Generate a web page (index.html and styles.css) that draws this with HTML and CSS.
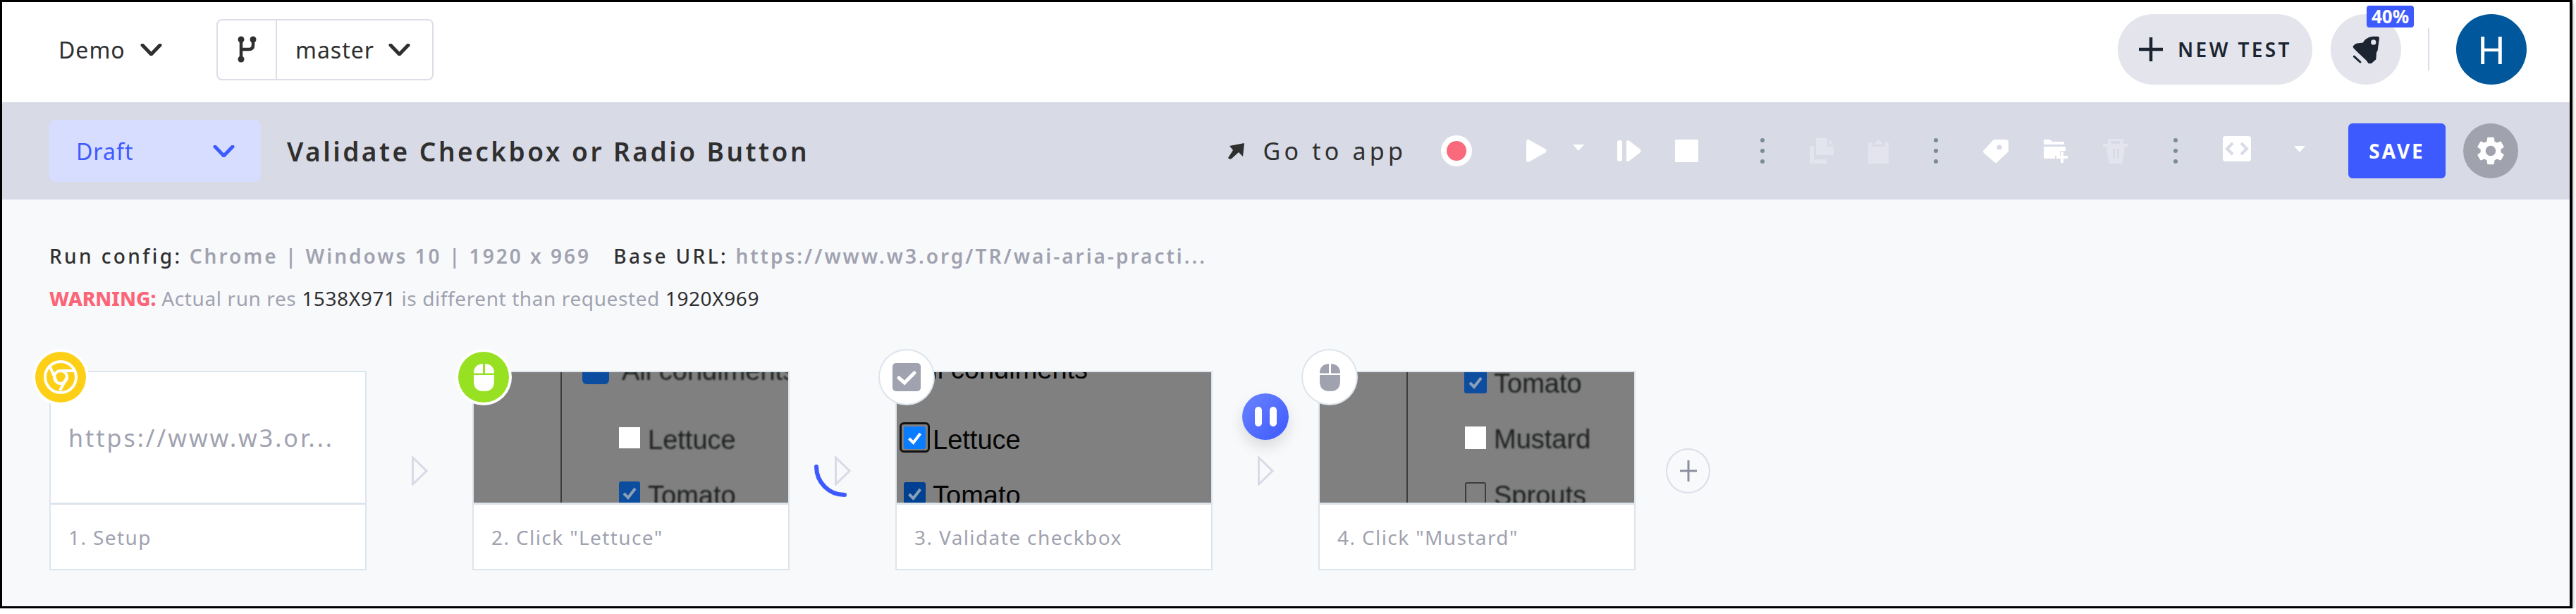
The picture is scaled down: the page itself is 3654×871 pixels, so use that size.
FILE: index.html
```html
<!DOCTYPE html>
<html lang="en">
<head>
    <meta charset="UTF-8">
    <title>Validate Checkbox or Radio Button</title>
    <link rel="stylesheet" href="styles.css">
</head>
<body>
<div class="frame">
    <header class="topbar">
        <div class="project">
            <span>Demo</span>
            <svg class="chevron" viewBox="0 0 31 17"><path d="M3 2l12.500 13L28 2"/></svg>
        </div>
        <div class="branch">
            <div class="branch-icon">
                <svg width="29" height="40" viewBox="0 0 29 40"><path d="M6 6v28M23 6v8q0 6-6 6H6"/><circle cx="6" cy="6" r="4.500"/><circle cx="23" cy="6" r="4.500"/><circle cx="6" cy="34" r="4.500"/></svg>
            </div>
            <div class="branch-name">
                <span>master</span>
                <svg class="chevron" viewBox="0 0 31 17"><path d="M3 2l12.500 13L28 2"/></svg>
            </div>
        </div>
        <div class="top-actions">
            <button class="new-test">
                <svg width="34" height="34" viewBox="0 0 34 34"><path d="M17 0v34M0 17h34"/></svg>
                <span>NEW TEST</span>
            </button>
            <div class="rocket-btn">
                <svg width="38" height="39" viewBox="0 0 115 118"><path d="M108 2q7 0 7 7l-7 52q-1 5-5 9l-2 28q0 4-4 6l-18 16q-5 3-9 0L58 104 22 70 5 53q-6-7 0-12l8-7q3-2 7-2l25-3q4-9 11-15Q70 3 85 2z"/><circle class="rocket-hole" cx="90" cy="27" r="11"/><path class="rocket-flame" d="M7 88l26 24"/></svg>
                <span class="percent">40%</span>
            </div>
            <div class="top-divider"></div>
            <div class="avatar">H</div>
        </div>
    </header>

    <div class="toolbar">
        <div class="status">
            <span>Draft</span>
            <svg class="chevron" viewBox="0 0 31 17"><path d="M3 2l12.500 13L28 2"/></svg>
        </div>
        <h1 class="title">Validate Checkbox or Radio Button</h1>
        <div class="tools">
            <div class="go-app">
                <svg width="24" height="24" viewBox="0 0 24 24"><path d="M24 1l-2 19-6-6L6 23q-3 2-5-1l7-11-5-6z"/></svg>
                <span>Go to app</span>
            </div>
            <div class="record"></div>
            <div class="playback">
                <svg class="play" width="29" height="32" viewBox="0 0 29 32"><path d="M0 3q0-3 3-3 1 0 2 1l23 13q1 2 0 4L5 31q-1 1-2 1-3 0-3-3z"/></svg>
                <svg class="caret" width="16" height="9" viewBox="0 0 16 9"><path d="M0 0h16l-8 9z"/></svg>
                <svg class="step" width="34" height="30" viewBox="0 0 34 30"><rect width="7" height="30" rx="3"/><path d="M13 2q0-2 3-2l17 13q1 2 0 4L16 30q-3 0-3-2z"/></svg>
                <div class="stop"></div>
            </div>
            <div class="dots"><i></i><i></i><i></i></div>
            <div class="tool-group">
                <svg class="off" width="34" height="36" viewBox="0 0 34 36"><path d="M0 11h6v19h18v6H0zM9 0h16v12h9v12H9zM28 1l6 8h-6z"/></svg>
                <svg class="off" width="29" height="36" viewBox="0 0 29 36"><path d="M0 6h5v6h19V6h5v30H0zM8 9l6.500-8L21 9z"/></svg>
            </div>
            <div class="dots"><i></i><i></i><i></i></div>
            <div class="tool-group">
                <svg width="36" height="34" viewBox="0 0 36 34"><path d="M36 4v14L20 33q-2 2-4 0L1 20q-2-2 0-4L15 1h17q4 0 4 3z"/><circle class="hole" cx="23" cy="12" r="3.500"/></svg>
                <svg width="36" height="34" viewBox="0 0 36 34"><path d="M1 1h9l3 3h17v4H1zM1 11h31v6h-8v7h-7v4H3q-2 0-2-2z"/><path d="M27 18v16M19 26h16" class="folder-plus"/></svg>
                <svg class="off" width="36" height="36" viewBox="0 0 36 36"><path d="M7 8V1h22v7h7v4H31l-3 22q0 2-2 2H10q-2 0-2-2L5 12H0V8zM12 4v4h12V4zM14 15v14h3V15zM20 15v14h3V15z" fill-rule="evenodd"/></svg>
            </div>
            <div class="dots"><i></i><i></i><i></i></div>
            <div class="code-group">
                <div class="code-btn">
                    <svg width="40" height="36" viewBox="0 0 40 36"><path d="M14 10l-8 8 8 8M26 10l8 8-8 8"/></svg>
                </div>
                <svg class="caret" width="16" height="9" viewBox="0 0 16 9"><path d="M0 0h16l-8 9z"/></svg>
            </div>
            <button class="save">SAVE</button>
            <div class="gear">
                <svg width="48" height="48" viewBox="0 0 24 24"><path d="M19.140 12.940c.04-.3.06-.61.06-.94 0-.32-.02-.64-.07-.94l2.030-1.580c.18-.14.23-.41.12-.61l-1.920-3.320c-.12-.22-.37-.29-.59-.22l-2.390.96c-.5-.38-1.030-.7-1.620-.94l-.36-2.540c-.04-.24-.24-.41-.48-.41h-3.840c-.24 0-.43.17-.47.41l-.36 2.540c-.59.24-1.130.57-1.620.94l-2.390-.96c-.22-.08-.47 0-.59.22L2.740 8.870c-.12.21-.08.47.12.61l2.030 1.580c-.05.3-.09.63-.09.94s.02.64.07.94l-2.030 1.580c-.18.14-.23.41-.12.61l1.920 3.320c.12.22.37.29.59.22l2.390-.96c.5.38 1.030.7 1.620.94l.36 2.540c.05.24.24.41.48.41h3.840c.24 0 .44-.17.47-.41l.36-2.540c.59-.24 1.130-.56 1.620-.94l2.390.96c.22.08.47 0 .59-.22l1.920-3.320c.12-.22.07-.47-.12-.61l-2.010-1.580zM12 15.600c-1.980 0-3.600-1.620-3.600-3.600s1.620-3.600 3.600-3.600 3.600 1.620 3.600 3.600-1.620 3.600-3.600 3.600z"/></svg>
            </div>
        </div>
    </div>

    <main class="content">
        <div class="run-info">
            <b>Run config:</b> <span class="run-value">Chrome | Windows 10 | 1920 x 969</span>
            <b class="base-label">Base URL:</b> <span class="run-value">https://www.w3.org/TR/wai-aria-practi...</span>
        </div>
        <div class="warning">
            <b>WARNING:</b> Actual run res <em>1538X971</em> is different than requested <em>1920X969</em>
        </div>

        <div class="steps">
            <div class="card">
                <div class="badge badge-chrome">
                    <svg width="48" height="48" viewBox="0 0 48 48"><circle cx="24" cy="24" r="22"/><circle cx="24" cy="24" r="9"/><path d="M8 7l10 23M24 15h21M33 24L23 43"/></svg>
                </div>
                <div class="card-url">https://www.w3.or...</div>
                <div class="card-caption">1. Setup</div>
            </div>

            <div class="connector">
                <svg class="arrow" width="23" height="42" viewBox="0 0 23 42"><path d="M1.500 2L21 21 1.500 40z"/></svg>
            </div>

            <div class="card">
                <div class="badge badge-click">
                    <svg class="mouse" width="29" height="39" viewBox="0 0 29 39"><path d="M0 16h29v9q0 14-14.500 14T0 25zM0 13.500Q0 1 13 0v13.500zM16 0q13 1 13 13.500H16z"/></svg>
                </div>
                <div class="shot">
                    <i class="line"></i>
                    <span class="cb cb-dim s2-all-box"></span>
                    <span class="shot-text soft s2-all">All condiments</span>
                    <span class="cb cb-white s2-lettuce-box"></span>
                    <span class="shot-text soft s2-lettuce">Lettuce</span>
                    <span class="cb cb-dim s2-tomato-box"><svg viewBox="0 0 30 32"><path d="M7 17l6 6 10-13"/></svg></span>
                    <span class="shot-text soft s2-tomato">Tomato</span>
                </div>
                <div class="card-caption">2. Click "Lettuce"</div>
            </div>

            <div class="connector">
                <svg class="arrow" width="23" height="42" viewBox="0 0 23 42"><path d="M1.500 2L21 21 1.500 40z"/></svg>
                <svg class="spinner" width="46" height="46" viewBox="0 0 46 46"><path d="M3 3a40 40 0 0 0 40 40"/></svg>
            </div>

            <div class="card">
                <div class="badge badge-plain">
                    <div class="check-icon">
                        <svg width="40" height="40" viewBox="0 0 40 40"><path d="M9 21l8 7 14-14"/></svg>
                    </div>
                </div>
                <div class="shot">
                    <span class="shot-text s3-all">All condiments</span>
                    <span class="s3-focus"></span>
                    <span class="cb cb-blue s3-lettuce-box"><svg viewBox="0 0 30 32"><path d="M7 17l6 6 10-13"/></svg></span>
                    <span class="shot-text s3-lettuce">Lettuce</span>
                    <span class="cb cb-navy s3-tomato-box"><svg viewBox="0 0 30 32"><path d="M7 17l6 6 10-13"/></svg></span>
                    <span class="shot-text s3-tomato">Tomato</span>
                </div>
                <div class="card-caption">3. Validate checkbox</div>
            </div>

            <div class="connector">
                <svg class="arrow" width="23" height="42" viewBox="0 0 23 42"><path d="M1.500 2L21 21 1.500 40z"/></svg>
                <div class="pause"><i></i><i></i></div>
            </div>

            <div class="card">
                <div class="badge badge-plain">
                    <svg class="mouse mouse-grey" width="29" height="39" viewBox="0 0 29 39"><path d="M0 16h29v9q0 14-14.500 14T0 25zM0 13.500Q0 1 13 0v13.500zM16 0q13 1 13 13.500H16z"/></svg>
                </div>
                <div class="shot">
                    <i class="line"></i>
                    <span class="cb cb-dim s4-tomato-box"><svg viewBox="0 0 30 32"><path d="M7 17l6 6 10-13"/></svg></span>
                    <span class="shot-text soft s4-tomato">Tomato</span>
                    <span class="cb cb-white s4-mustard-box"></span>
                    <span class="shot-text soft s4-mustard">Mustard</span>
                    <span class="cb cb-empty s4-sprouts-box"></span>
                    <span class="shot-text soft s4-sprouts">Sprouts</span>
                </div>
                <div class="card-caption">4. Click "Mustard"</div>
            </div>

            <div class="add-step">
                <svg width="24" height="30" viewBox="0 0 24 30"><path d="M12 0v30M0 15h24"/></svg>
            </div>
        </div>
    </main>
</div>
</body>
</html>
```

FILE: styles.css
```css
body {
    margin: 0;
    background: #fff;
    font-family: "Noto Sans", "Lato", sans-serif;
    color: #2f2f2f;
}
svg {
    display: block;
    flex: none;
}
.frame {
    box-sizing: border-box;
    width: 3649px;
    height: 863px;
    border: 3px solid #000;
    border-right-width: 4px;
    box-shadow: 0 4px 6px rgba(0, 0, 0, 0.35);
    display: flex;
    flex-direction: column;
}

/* top bar */
.topbar {
    height: 142px;
    flex: none;
    display: flex;
    align-items: center;
    padding: 0 61px 8px 80px;
    box-sizing: border-box;
    background: #fff;
    font-size: 32px;
    letter-spacing: 1px;
}
.project {
    display: flex;
    align-items: center;
    gap: 21px;
    width: 224px;
}
.chevron {
    width: 31px;
    height: 17px;
    fill: none;
    stroke: #2f2f2f;
    stroke-width: 5;
    stroke-linecap: round;
    stroke-linejoin: round;
}
.branch {
    display: flex;
    height: 87px;
    width: 308px;
    box-sizing: border-box;
    border: 2px solid #dcdde8;
    border-radius: 8px;
}
.branch-icon {
    width: 84px;
    flex: none;
    display: flex;
    align-items: center;
    justify-content: center;
    border-right: 2px solid #dcdde8;
    box-sizing: border-box;
}
.branch-icon svg {
    stroke: #2f2f2f;
    stroke-width: 4.500;
    fill: none;
}
.branch-icon circle {
    fill: #2f2f2f;
    stroke: none;
}
.branch-name {
    display: flex;
    align-items: center;
    gap: 20px;
    padding-left: 26px;
}
.top-actions {
    margin-left: auto;
    display: flex;
    align-items: center;
}
.new-test {
    width: 276px;
    height: 100px;
    border: none;
    border-radius: 50px;
    background: #e3e4ec;
    display: flex;
    align-items: center;
    gap: 21px;
    padding: 0 0 0 30px;
    font: 600 28px "Noto Sans", sans-serif;
    letter-spacing: 3.400px;
    color: #1b2430;
}
.new-test svg {
    stroke: #1b2430;
    stroke-width: 4.500;
}
.rocket-btn {
    position: relative;
    width: 100px;
    height: 100px;
    margin-left: 26px;
    border-radius: 50%;
    background: #e3e4ec;
    display: flex;
    align-items: center;
    justify-content: center;
}
.rocket-btn svg {
    fill: #1b2430;
}
.rocket-hole {
    fill: #e3e4ec;
}
.rocket-flame {
    fill: none;
    stroke: #1b2430;
    stroke-width: 9;
    stroke-linecap: round;
}
.percent {
    position: absolute;
    top: -12px;
    left: 51px;
    width: 67px;
    height: 31px;
    border-radius: 4px;
    background: #3d5afe;
    color: #fff;
    font-size: 26px;
    font-weight: 700;
    letter-spacing: 0;
    line-height: 31px;
    text-align: center;
}
.top-divider {
    width: 2px;
    height: 60px;
    margin: 0 38px 0 38px;
    background: #dcdde8;
}
.avatar {
    width: 100px;
    height: 100px;
    border-radius: 50%;
    background: #01579b;
    color: #fff;
    font-size: 54px;
    letter-spacing: 0;
    line-height: 100px;
    text-align: center;
}

/* toolbar */
.toolbar {
    height: 138px;
    flex: none;
    box-sizing: border-box;
    display: flex;
    align-items: center;
    padding: 0 73px 0 67px;
    background: #d8dae6;
}
.status {
    width: 300px;
    height: 88px;
    box-sizing: border-box;
    display: flex;
    align-items: center;
    justify-content: space-between;
    padding: 0 37px 0 38px;
    border-radius: 8px;
    background: #d6ddff;
    color: #3d5afe;
    font-size: 32px;
    letter-spacing: 1px;
}
.status .chevron {
    stroke: #3d5afe;
}
.title {
    margin: 0 0 0 37px;
    font-size: 37px;
    font-weight: 600;
    letter-spacing: 3.500px;
    color: #2f2f2f;
}
.tools {
    margin-left: auto;
    display: flex;
    align-items: center;
}
.go-app {
    display: flex;
    align-items: center;
    gap: 26px;
    font-size: 34px;
    letter-spacing: 5.200px;
    margin-right: 49px;
}
.go-app svg {
    fill: #2f2f2f;
}
.record {
    width: 28px;
    height: 28px;
    border: 8px solid #fff;
    border-radius: 50%;
    background: #fa6a7d;
    margin-right: 77px;
}
.playback {
    display: flex;
    align-items: center;
    fill: #fff;
}
.caret {
    fill: #fff;
}
.playback .caret {
    margin: 0 47px 10px 37px;
}
.stop {
    width: 33px;
    height: 32px;
    margin-left: 48px;
    background: #fff;
}
.dots {
    width: 6px;
    margin: 0 64px;
    display: flex;
    flex-direction: column;
    gap: 9px;
}
.playback + .dots {
    margin-left: 88px;
}
.dots i {
    height: 6px;
    border-radius: 50%;
    background: #7c8b99;
}
.tool-group {
    display: flex;
    align-items: center;
    gap: 49px;
    fill: #fff;
}
.tool-group .off {
    fill: #e3e4ed;
}
.tool-group .hole {
    fill: #d8dae6;
}
.folder-plus {
    fill: none;
    stroke: #fff;
    stroke-width: 4;
}
.code-group {
    display: flex;
    align-items: center;
    gap: 61px;
    margin-right: 61px;
}
.code-btn {
    width: 40px;
    height: 36px;
    border-radius: 4px;
    background: #fff;
    margin-bottom: 6px;
}
.code-btn svg {
    fill: none;
    stroke: #d8dae6;
    stroke-width: 4;
}
.code-group .caret {
    margin-bottom: 6px;
}
.save {
    width: 138px;
    height: 78px;
    border: none;
    border-radius: 6px;
    background: #3d5afe;
    color: #fff;
    font: 700 28px "Noto Sans", sans-serif;
    letter-spacing: 3px;
}
.gear {
    width: 78px;
    height: 78px;
    margin-left: 25px;
    border-radius: 50%;
    background: #a0a2ae;
    display: flex;
    align-items: center;
    justify-content: center;
    fill: #fff;
}

/* content */
.content {
    flex: 1;
    padding: 60px 0 0 67px;
    background: #f8f9fb;
    font-size: 28px;
    line-height: 40px;
}
.run-info {
    letter-spacing: 3px;
    white-space: nowrap;
}
.run-info b {
    font-weight: 500;
    letter-spacing: 3.400px;
    color: #2f2f2f;
}
.run-value {
    font-weight: 600;
    color: #a0a2b0;
}
.base-label {
    margin-left: 22px;
}
.warning {
    margin-top: 20px;
    color: #a0a2b0;
    letter-spacing: 0.600px;
    white-space: nowrap;
}
.warning b {
    color: #fb6578;
    font-weight: 800;
    letter-spacing: 0;
}
.warning em {
    font-style: normal;
    color: #2f2f2f;
}

/* steps */
.steps {
    margin-top: 83px;
    display: flex;
    align-items: center;
}
.card {
    position: relative;
    width: 450px;
    height: 283px;
    box-sizing: border-box;
    border: 2px solid #dde5ec;
    background: #fff;
    display: flex;
    flex-direction: column;
}
.card-url {
    height: 185px;
    flex: none;
    display: flex;
    align-items: center;
    padding-left: 25px;
    font-size: 34px;
    letter-spacing: 3px;
    color: #a0a2b0;
}
.card-caption {
    flex: 1;
    display: flex;
    align-items: center;
    padding-left: 25px;
    border-top: 3px solid #dde5ec;
    letter-spacing: 1.400px;
    color: #a0a2b0;
}
.badge {
    position: absolute;
    z-index: 2;
    top: -29px;
    left: -22px;
    width: 72px;
    height: 72px;
    border-radius: 50%;
    display: flex;
    align-items: center;
    justify-content: center;
    box-shadow: 0 0 0 4px #fff;
}
.badge-chrome {
    background: #fdd017;
}
.badge-chrome svg {
    fill: none;
    stroke: #fff;
    stroke-width: 4;
}
.badge-click {
    background: #97e122;
}
.badge-plain {
    background: #fff;
    box-shadow: 0 0 0 2px #fff, 0 0 0 4px #dde5ec;
}
.mouse {
    fill: #fff;
}
.mouse-grey {
    fill: #a0a2b0;
}
.check-icon {
    width: 40px;
    height: 40px;
    border-radius: 5px;
    background: #a0a2b0;
}
.check-icon svg {
    fill: none;
    stroke: #fff;
    stroke-width: 5;
    stroke-linecap: round;
}

/* the grey app screenshots in the cards */
.shot {
    position: relative;
    height: 185px;
    flex: none;
    overflow: hidden;
    background: #808080;
}
.line {
    position: absolute;
    top: 0;
    bottom: 0;
    left: 123px;
    width: 2px;
    background: #3d3d3d;
}
.shot-text {
    position: absolute;
    font: 38px/38px "Liberation Sans", sans-serif;
    color: #050505;
    white-space: nowrap;
}
.soft {
    color: #1c1f1e;
    filter: blur(0.8px);
}
.cb {
    position: absolute;
    box-sizing: border-box;
    width: 30px;
    height: 32px;
    border-radius: 3px;
}
.cb svg {
    width: 100%;
    height: 100%;
    fill: none;
    stroke: #fff;
    stroke-width: 4;
}
.cb-dim {
    background: #0d4da0;
}
.cb-dim svg,
.cb-navy svg {
    stroke: #8aa0b8;
}
.cb-white {
    background: #fff;
    border-radius: 0;
}
.cb-blue {
    background: #0a7cff;
}
.cb-navy {
    background: #004090;
}
.cb-empty {
    border: 2px solid #3d3d3d;
}
.s2-all-box {
    left: 154px;
    top: -21px;
    width: 38px;
    height: 38px;
    border-radius: 6px;
}
.s2-all {
    left: 210px;
    top: -21px;
}
.s2-lettuce-box {
    left: 206px;
    top: 78px;
    height: 30px;
}
.s2-lettuce {
    left: 247px;
    top: 77px;
}
.s2-tomato-box {
    left: 206px;
    top: 155px;
}
.s2-tomato {
    left: 247px;
    top: 156px;
}
.s3-all {
    left: 24px;
    top: -23px;
}
.s3-focus {
    position: absolute;
    left: 4px;
    top: 71px;
    width: 43px;
    height: 43px;
    box-sizing: border-box;
    border: 3px solid #111;
    border-radius: 6px;
}
.s3-lettuce-box {
    left: 10px;
    top: 77px;
    width: 31px;
}
.s3-lettuce {
    left: 51px;
    top: 77px;
}
.s3-tomato-box {
    left: 10px;
    top: 156px;
    width: 31px;
}
.s3-tomato {
    left: 51px;
    top: 156px;
}
.s4-tomato-box {
    left: 205px;
    top: -2px;
    width: 32px;
}
.s4-tomato {
    left: 247px;
    top: -3px;
}
.s4-mustard-box {
    left: 206px;
    top: 77px;
}
.s4-mustard {
    left: 247px;
    top: 76px;
}
.s4-sprouts-box {
    left: 206px;
    top: 156px;
}
.s4-sprouts {
    left: 247px;
    top: 156px;
}

.connector {
    position: relative;
    width: 150px;
    flex: none;
    display: flex;
    justify-content: center;
}
.arrow {
    fill: none;
    stroke: #d8dae6;
    stroke-width: 3;
}
.spinner {
    position: absolute;
    top: 12px;
    left: 35px;
    fill: none;
    stroke: #3d5afe;
    stroke-width: 6;
    stroke-linecap: round;
}
.pause {
    position: absolute;
    top: -89px;
    left: 42px;
    width: 66px;
    height: 66px;
    border-radius: 50%;
    background: linear-gradient(135deg, #6a83ff, #3d5afe);
    box-shadow: 0 10px 20px rgba(0, 0, 0, 0.12);
    display: flex;
    align-items: center;
    justify-content: center;
    gap: 11px;
}
.pause i {
    width: 10px;
    height: 28px;
    border-radius: 5px;
    background: #fff;
}
.add-step {
    width: 63px;
    height: 64px;
    margin-left: 43px;
    box-sizing: border-box;
    border: 2px solid #dcdde8;
    border-radius: 50%;
    display: flex;
    align-items: center;
    justify-content: center;
}
.add-step svg {
    stroke: #8d8f9f;
    stroke-width: 3;
}
```
